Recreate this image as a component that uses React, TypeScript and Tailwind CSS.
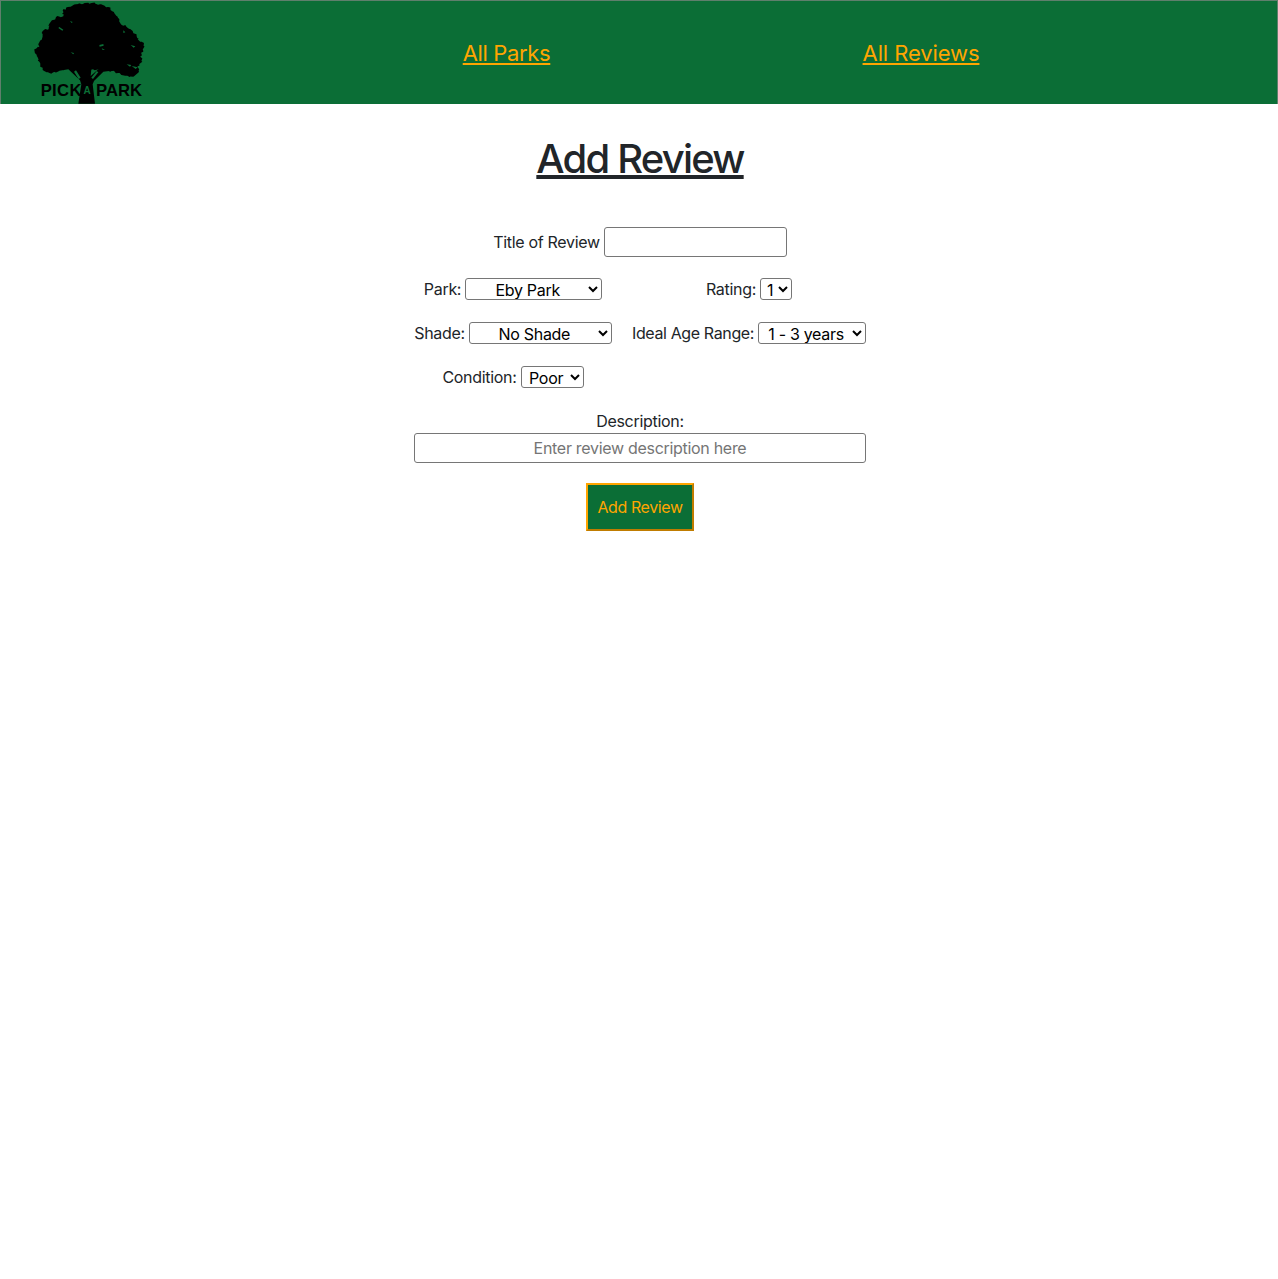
const crown = [
  [228, 10], [250, 8], [275, 6], [300, 10], [324, 18], [342, 33], [354, 50], [362, 68], [378, 76], [398, 90],
  [410, 106], [418, 120], [432, 128], [430, 150], [422, 165], [427, 182], [414, 195], [417, 212], [400, 227],
  [375, 224], [355, 216], [335, 210], [310, 208], [290, 206], [265, 208], [235, 206], [205, 202], [185, 206], [165, 214],
  [150, 217], [128, 207], [118, 182], [110, 165], [102, 145], [116, 138], [116, 128], [126, 113], [128, 90], [146, 83],
  [148, 68], [168, 48], [190, 46], [188, 28], [203, 18],
];

// roughens the outline so it reads like foliage
const crownPath = crown
  .flatMap(([x, y], i) => {
    const [nx, ny] = crown[(i + 1) % crown.length];
    return [0, 0.25, 0.5, 0.75].map((t, k) => {
      const a = i * 4 + k;
      const dx = k === 0 ? 0 : 2.6 * Math.sin(a * 2.3);
      const dy = k === 0 ? 0 : 2.6 * Math.cos(a * 1.7);
      return `${x + (nx - x) * t + dx},${y + (ny - y) * t + dy}`;
    });
  })
  .join(" ");

const Logo = () => (
  <svg viewBox="0 0 540 312" className="w-[180px] h-[104px] block shrink-0 ml-[-1px]">
    <polygon points={crownPath} fill="#000" />
    <path d="M250 195 L275 195 L272 225 L300 200 L345 200 L350 207 L310 212 L282 240 L278 250 L285 308 L235 308 L244 250 L240 238 L205 205 L160 212 L158 205 L205 195 Z" fill="#000" />
    <path d="M178 78l12 8-3 3-12-8zM298 132l12-3 1 5-12 3zM212 154l10 2-2 4zM392 132l14 4-5 4zM380 190l14 2-4 5zM395 195l18 4-6 5zM210 60l8 3-3 3zM370 88l6 6-6 2zM305 142l10 4-7 1z" fill="#0b6e36" />
    <path d="M228 208l14 22-6 4-14-22zM290 210l-16 20 5 4 16-20z" fill="#0b6e36" />
    <text x="122" y="284" fontSize="50" fontWeight="700" fontFamily="'Liberation Sans', sans-serif" fill="#000" textLength="122">PICK</text>
    <text x="288" y="284" fontSize="50" fontWeight="700" fontFamily="'Liberation Sans', sans-serif" fill="#000" textLength="138">PARK</text>
    <text x="261" y="280" fontSize="30" fontWeight="700" textAnchor="middle" fontFamily="'Liberation Sans', sans-serif" fill="#0b6e36">A</text>
  </svg>
);

const Header = () => (
  <div className="flex items-center h-[104px] bg-[#0b6e36] border border-[#5f7f6c] border-b-0">
    <div className="w-[298px] h-full">
      <Logo />
    </div>
    <div className="w-[415px] text-center pt-px">
      <a href="#" className="text-[22px] leading-[26px] tracking-[-0.35px] text-[#ffa500] underline">All Parks</a>
    </div>
    <div className="w-[414px] text-center pt-px">
      <a href="#" className="text-[22px] leading-[26px] tracking-[-0.1px] text-[#ffa500] underline">All Reviews</a>
    </div>
  </div>
);

const selectClass = "h-[22px] border border-[#767676] rounded-[3px] bg-white text-black text-center text-base leading-5 tracking-[-0.3px] shrink-0";

const Field = ({ label, width, options, labelClass }: { label: string; width: string; options: string[]; labelClass?: string }) => (
  <div className="flex items-center justify-center gap-1 h-[22px] whitespace-nowrap">
    <label className={labelClass}>{label}</label>
    <select className={`${selectClass} ${width}`}>
      {options.map((o) => (
        <option key={o}>{o}</option>
      ))}
    </select>
  </div>
);

const App = () => {
  return (
    <div className="min-h-[1279px] bg-white text-[#212529] font-['Inter',sans-serif] text-base tracking-[-0.3px]">
      <Header />
      <div className="flex flex-col items-center pl-[2px]">
        <h1 className="mt-[31px] text-[40px] leading-[48px] font-medium tracking-[-1.8px] underline">Add Review</h1>
        <form className="mt-[44px] w-[452px] flex flex-col items-center">
          <div className="flex items-center gap-1 h-[30px] whitespace-nowrap">
            <label>Title of Review</label>
            <input className="w-[183px] h-[30px] border border-[#767676] rounded-[3px] px-2 shrink-0" />
          </div>
          <div className="mt-[21px] w-full grid grid-cols-[198px_234px] gap-x-5 gap-y-[22px]">
            <Field label="Park:" width="w-[137px]" options={["Eby Park"]} />
            <Field label="Rating:" width="w-[32px]" options={["1"]} />
            <Field label="Shade:" width="w-[143px]" options={["No Shade"]} />
            <Field label="Ideal Age Range:" labelClass="tracking-[-0.37px]" width="w-[108px]" options={["1 - 3 years"]} />
            <Field label="Condition:" width="w-[63px]" options={["Poor"]} />
          </div>
          <label className="mt-[22px] leading-[23px]">Description:</label>
          <input
            placeholder="Enter review description here"
            className="w-[452px] h-[30px] border border-[#767676] rounded-[3px] text-center placeholder:text-[#757575]"
          />
          <button
            type="button"
            className="mt-5 w-[108px] h-[48px] bg-[#0b6e36] text-[#ffa500] tracking-[-0.4px] border-2 border-t-[#ffa500] border-l-[#ffa500] border-r-[#c07c00] border-b-[#c07c00]"
          >
            Add Review
          </button>
        </form>
      </div>
    </div>
  );
};

export default App;
